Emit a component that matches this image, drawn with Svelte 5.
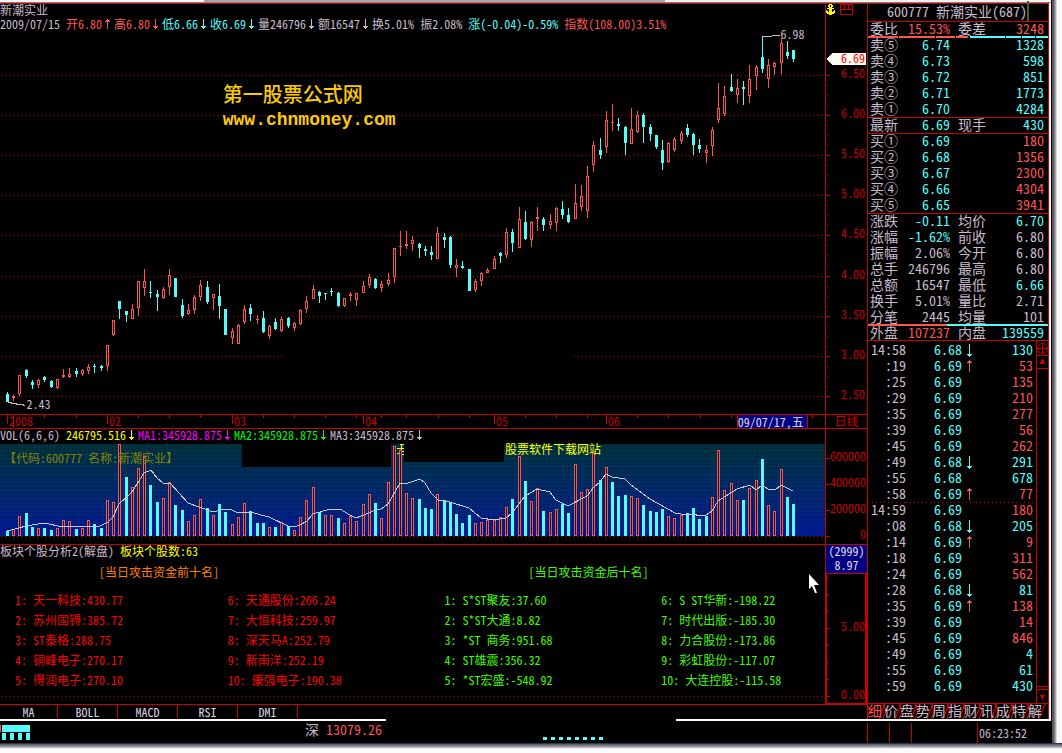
<script>
  // Daily candles: high, body top, body bottom, low, direction (u = up, d = down)
  const candleData = `392,394,402,402,d 395,396,398,401,u 375,375,394,396,u 369,370,376,378,d 380,382,385,389,d 379,380,385,388,u
376,377,380,382,d 380,381,387,388,d 379,379,388,389,u 369,375,377,378,u 368,374,377,378,u 368,371,374,377,d
369,370,374,376,u 364,367,371,374,u 364,366,367,373,d 365,366,368,371,d 345,345,366,371,u 320,320,335,336,u
301,301,309,319,d 311,311,315,322,d 304,309,319,319,u 281,281,308,316,u 269,281,288,296,u 281,292,293,298,d
290,294,297,311,d 287,289,298,299,u 269,275,287,295,u 278,278,297,297,d 299,305,316,318,d 304,310,314,315,u
295,297,310,314,u 280,285,297,301,u 281,287,302,304,d 294,294,298,310,u 284,296,306,319,d 309,309,335,335,d
328,331,338,344,u 324,325,344,344,u 305,309,322,324,u 304,308,314,321,d 315,319,320,324,u 311,318,332,333,d
325,326,336,339,u 318,322,329,330,d 317,319,331,332,u 317,318,326,328,d 322,323,328,331,u 309,310,324,325,u
296,301,309,313,u 285,289,299,299,u 291,292,296,303,d 293,293,294,300,d 288,291,292,296,d 292,293,306,307,d
298,298,306,307,u 292,294,296,301,u 293,293,300,306,u 281,286,293,293,u 274,277,285,288,u 278,279,288,289,d
281,284,288,292,u 273,280,284,286,u 248,248,277,283,u 231,246,247,256,u 231,244,246,249,u 236,240,244,251,u
243,244,248,258,d 246,249,251,256,d 246,252,255,260,d 227,233,259,259,u 233,237,240,248,d 236,237,265,268,d
259,265,268,277,u 261,266,268,269,d 269,269,291,291,d 279,281,290,292,u 272,273,281,286,u 268,270,273,273,u
256,259,269,269,u 252,253,256,263,d 228,232,255,258,u 229,232,243,252,d 207,219,248,248,u 211,222,239,240,d
221,222,240,247,u 207,217,219,231,u 217,219,225,231,d 214,221,225,229,u 207,208,223,231,u 201,209,215,219,d
208,215,222,223,d 184,203,219,219,u 185,196,207,211,u 166,176,211,218,u 141,145,165,172,u 138,150,155,159,d
111,120,147,153,u 104,122,123,131,u 118,124,126,131,d 126,127,143,155,d 108,129,144,144,u 111,115,132,133,u
113,115,127,143,d 124,127,134,141,d 135,135,147,149,d 140,150,163,170,d 142,143,162,163,u 137,139,150,152,u
131,133,141,144,u 124,128,135,137,d 133,134,145,155,d 139,145,149,153,d 145,150,153,163,u 127,130,146,156,u
83,108,120,123,u 86,96,114,116,u 74,87,91,92,d 79,88,95,103,u 81,87,89,105,d 65,79,96,103,u
65,67,76,90,u 36,57,69,73,d 59,65,79,88,u 62,63,67,75,u 38,43,63,74,u 41,52,56,59,d 50,50,59,62,d`;

  const volumeData = `531d 529u 516u 513d 527d 528u 528d 530d 528u 520u 521u 529d 528u 520u 524d 528d 500u 502u 444u 477d 487u
468u 456u 485d 502d 498u 482u 505d 510d 521u 515u 499u 508d 515u 504d 512d 524u 517u 503u 511d 523d 523d 527u
527d 522u 526d 530u 517u 500u 487u 512d 515u 515u 518d 523u 516u 521u 504u 494u 503d 518u 482u 446u 450u 493u
498u 499d 508d 509d 494u 500d 502d 514d 523d 515d 523u 522u 520u 520u 517u 507u 499d 456u 481d 501u 488u 511d
512u 509u 504d 513d 464u 492u 489u 453u 480d 467u 482d 496d 495d 496u 498u 505d 511d 512d 509d 516u 518u 515u
513d 508d 519d 516d 497u 450u 490u 483u 500u 500d 488u 480u 459d 505u 511u 469u 497d 504d`;

  const xAt = (i) => 7 + Math.round(i * 6.238);

  const candles = candleData.split(/\s+/).map((s, i) => {
    const [hi, top, bot, lo, dir] = s.split(',');
    return { x: xAt(i), hi: +hi, top: +top, bot: +bot, lo: +lo, up: dir === 'u' };
  });
  const volumes = volumeData.split(/\s+/).map((s, i) => ({
    x: xAt(i),
    y: parseInt(s),
    up: s.endsWith('u')
  }));

  const average =
    '7,531 19,528 26,526 44,523 63,527 76,526 100,526 108,522 113,517 119,504 132,492 144,473 151,470 157,478 163,483 170,483 188,503 213,512 225,509 232,510 238,513 250,512 269,517 288,526 294,527 300,525 307,521 313,514 330,509 340,509 350,515 356,518 369,513 375,510 381,509 388,504 400,483 408,483 420,479 425,483 431,493 438,500 450,502 469,508 481,518 494,520 506,518 512,513 525,496 537,489 550,492 556,500 568,506 587,496 594,487 600,482 606,474 612,477 625,479 631,485 650,499 675,513 687,515 693,514 700,516 706,515 712,511 718,501 737,489 750,485 756,490 762,485 768,489 775,490 781,485 793,491';

  const priceGrid = [75, 115, 155, 195, 235, 276, 316, 356, 396];
  const priceLabels = ['6.50', '6.00', '5.50', '5.00', '4.50', '4.00', '3.50', '3.00', '2.50'];
  const minorPrice = priceGrid.flatMap((y) => [y + 10, y + 20, y + 30]).filter((y) => y < 396);

  const summary = [
    ['2009/07/15', '', 'grey', true],
    ['开6.80', '↑', 'red'],
    ['高6.80', '↓', 'red'],
    ['低6.66', '↓', 'cyan'],
    ['收6.69', '↓', 'cyan'],
    ['量246796', '↓', 'grey'],
    ['额16547', '↓', 'grey'],
    ['换5.01%', '', 'grey', true],
    ['振2.08%', '', 'grey', true],
    ['涨(-0.04)-0.59%', '', 'cyan', true],
    ['指数(108.00)3.51%', '', 'red']
  ];
  const volSummary = [
    ['VOL(6,6,6)', '', 'grey', true],
    ['246795.516', '↓', 'yellow'],
    ['MA1:345928.875', '↓', 'magenta'],
    ['MA2:345928.875', '↓', 'green'],
    ['MA3:345928.875', '↓', 'grey']
  ];

  const months = [
    [7, '2008'],
    [107, '02'],
    [232, '03'],
    [363, '04'],
    [494, '05'],
    [606, '06']
  ];
  const minorDates = [44, 76, 138, 169, 200, 263, 294, 325, 356, 381, 406, 438, 469, 525, 556, 587, 637, 668, 700, 731, 812];

  const ranks = [
    ['1: 天一科技:430.77', '2: 苏州固锝:385.72', '3: ST泰格:288.75', '4: 铜峰电子:270.17', '5: 得润电子:270.10'],
    ['6: 天通股份:266.24', '7: 大恒科技:259.97', '8: 深天马Ａ:252.79', '9: 新南洋:252.19', '10: 康强电子:190.38'],
    ['1: S*ST聚友:37.60', '2: S*ST大通:8.82', '3: *ST 商务:951.68', '4: ST雄震:356.32', '5: *ST宏盛:-548.92'],
    ['6: S ST华新:-198.22', '7: 时代出版:-185.30', '8: 力合股份:-173.86', '9: 彩虹股份:-117.07', '10: 大连控股:-115.58']
  ];

  // label, value, colour, label, value, colour, row style
  const quotes = [
    ['委比', '15.53%', 'red', '委差', '3248', 'red', 'ratio'],
    ['卖⑤', '6.74', 'cyan', '', '1328', 'cyan', ''],
    ['卖④', '6.73', 'cyan', '', '598', 'cyan', ''],
    ['卖③', '6.72', 'cyan', '', '851', 'cyan', ''],
    ['卖②', '6.71', 'cyan', '', '1773', 'cyan', ''],
    ['卖①', '6.70', 'cyan', '', '4284', 'cyan', 'line'],
    ['最新', '6.69', 'cyan', '现手', '430', 'cyan', 'line'],
    ['买①', '6.69', 'cyan', '', '180', 'red', ''],
    ['买②', '6.68', 'cyan', '', '1356', 'red', ''],
    ['买③', '6.67', 'cyan', '', '2300', 'red', ''],
    ['买④', '6.66', 'cyan', '', '4304', 'red', ''],
    ['买⑤', '6.65', 'cyan', '', '3941', 'red', 'line'],
    ['涨跌', '-0.11', 'cyan', '均价', '6.70', 'cyan', ''],
    ['涨幅', '-1.62%', 'cyan', '前收', '6.80', 'grey', ''],
    ['振幅', '2.06%', 'grey', '今开', '6.80', 'grey', ''],
    ['总手', '246796', 'grey', '最高', '6.80', 'grey', ''],
    ['总额', '16547', 'grey', '最低', '6.66', 'cyan', ''],
    ['换手', '5.01%', 'grey', '量比', '2.71', 'grey', ''],
    ['分笔', '2445', 'grey', '均量', '101', 'grey', 'flow'],
    ['外盘', '107237', 'red', '内盘', '139559', 'cyan', '']
  ];

  const ticks = [
    ['14:58', '6.68', 'd', '130', 'cyan'],
    [':19', '6.69', 'u', '53', 'red'],
    [':25', '6.69', '', '135', 'red'],
    [':29', '6.69', '', '210', 'red'],
    [':35', '6.69', '', '277', 'red'],
    [':39', '6.69', '', '56', 'red'],
    [':45', '6.69', '', '262', 'red'],
    [':49', '6.68', 'd', '291', 'cyan'],
    [':55', '6.68', '', '678', 'cyan'],
    [':58', '6.69', 'u', '77', 'red'],
    ['14:59', '6.69', '', '180', 'red'],
    [':08', '6.68', 'd', '205', 'cyan'],
    [':14', '6.69', 'u', '9', 'red'],
    [':18', '6.69', '', '311', 'red'],
    [':24', '6.69', '', '562', 'red'],
    [':28', '6.68', 'd', '81', 'cyan'],
    [':35', '6.69', 'u', '138', 'red'],
    [':39', '6.69', '', '14', 'red'],
    [':45', '6.69', '', '846', 'red'],
    [':49', '6.69', '', '4', 'cyan'],
    [':55', '6.69', '', '61', 'cyan'],
    [':59', '6.69', '', '430', 'cyan']
  ];

  const indicators = ['MA', 'BOLL', 'MACD', 'RSI', 'DMI'];
  let indicator = $state('');
  const views = [...'细价盘势周指财讯成特解'];
  let view = $state('细');
</script>

{#snippet readout(items)}
  {#each items as [text, arrow, tone, gap]}
    <span class={tone} class:gap>{text}{#if arrow}<svg class="inline-arrow" viewBox="0 0 12 12" aria-label={arrow} shape-rendering="crispEdges">
          {#if arrow === '↑'}
            <path d="M5 1h1v10h-1zM4 2h3v1h-3zM3 3h5v1h-5z" />
          {:else}
            <path d="M5 1h1v10h-1zM4 9h3v1h-3zM3 8h5v1h-5z" />
          {/if}
        </svg>{/if}</span>
  {/each}
{/snippet}

<div class="screen">
  <div class="window">
    <div class="strip"></div>
    <main>
      <div class="charts">
        <section class="price">
          <h1>新潮实业</h1>
          <div class="readout tall">{@render readout(summary)}</div>
          <svg class="plot" viewBox="0 31 825 383" preserveAspectRatio="none" shape-rendering="crispEdges">
            {#each priceGrid as y}
              {#if y === 356}
                <path class="dots" d="M1 {y}.5H283M573 {y}.5H825" />
              {:else}
                <path class="dots" d="M1 {y}.5H825" />
              {/if}
            {/each}
            {#each candles as c}
              {#if c.up}
                <g fill="#fc5454">
                  <rect x={c.x} y={c.hi} width="1" height={c.top - c.hi} />
                  <rect x={c.x} y={c.bot} width="1" height={c.lo - c.bot} />
                  {#if c.bot - c.top < 2}
                    <rect x={c.x - 1} y={c.top} width="3" height="1" />
                  {:else}
                    <rect x={c.x - 1} y={c.top} width="3" height={c.bot - c.top} />
                    <rect x={c.x} y={c.top + 1} width="1" height={c.bot - c.top - 2} fill="#000" />
                  {/if}
                </g>
              {:else}
                <g fill="#54fcfc">
                  <rect x={c.x} y={c.hi} width="1" height={c.lo - c.hi} />
                  <rect x={c.x - 1} y={c.top} width="3" height={c.bot - c.top} />
                </g>
              {/if}
            {/each}
            <path d="M8 402.5h4M11 403.5h6M16 404.5h8M23 405.5h2M763 36.5h9M772 35.5h8" stroke="#c8bccc" />
          </svg>
          <span class="note low">2.43</span>
          <span class="note high">6.98</span>
          <div class="watermark">
            <div>第一股票公式网</div>
            <div class="url">www.chnmoney.com</div>
          </div>
        </section>
        <div class="axis price-axis">
          <svg viewBox="826 4 41 410" width="41" height="410" shape-rendering="crispEdges">
            <path
              fill="#fcfc00"
              d="M829 4h3v1h-3zM828 5h2v2h-2zM831 5h2v2h-2zM829 7h3v1h-3zM827 8h7v1h-7zM830 8h1v6h-1zM829 8h3v6h-3zM826 10h1v3h-1zM827 11h1v3h-1zM828 12h5v2h-5zM833 11h1v3h-1zM834 10h1v3h-1zM829 14h3v1h-3z"
            />
            <path fill="none" stroke="#c80000" d="M840.5 4.5h12v10h-12zM840 9.5h13M848.5 5v5M844.5 5v5" />
            {#each priceGrid as y, i}
              <rect x="826" {y} width="4" height="1" fill="#c80000" />
              <text x="865" y={y + 3} text-anchor="end">{priceLabels[i]}</text>
            {/each}
            {#each minorPrice as y}
              <rect x="827" {y} width="1" height="1" fill="#c80000" />
            {/each}
            <path d="M826 59l6-6h34v12h-34z" fill="#fcfcf0" />
            <text class="tag" x="865" y="63" text-anchor="end">6.69</text>
          </svg>
        </div>

        <section class="dates">
          <svg viewBox="0 415 825 13" preserveAspectRatio="none" shape-rendering="crispEdges">
            {#each months as [x]}<rect {x} y="415" width="1" height="9" fill="#c80000" />{/each}
            <rect x="13" y="415" width="1" height="13" fill="#c80000" />
            {#each minorDates as x}<rect {x} y="415" width="1" height="3" fill="#c80000" />{/each}
          </svg>
          {#each months as [x, label]}
            <span class="month" style="left: {(x / 825) * 100}%">{label}</span>
          {/each}
          <button class="date">09/07/17,五</button>
        </section>
        <div class="axis period">日线</div>

        <section class="volume">
          <div class="readout vol">{@render readout(volSummary)}</div>
          <div class="field">
            <svg viewBox="0 444 825 93" preserveAspectRatio="none" shape-rendering="crispEdges">
              <defs>
                <linearGradient id="sea" x1="0" y1="0" x2="0" y2="1">
                  <stop offset="0" stop-color="#003238" />
                  <stop offset="0.4" stop-color="#002c60" />
                  <stop offset="0.7" stop-color="#002478" />
                  <stop offset="1" stop-color="#001894" />
                </linearGradient>
                <pattern id="grain" width="4" height="4" patternUnits="userSpaceOnUse">
                  <rect width="1" height="1" fill="#000060" opacity="0.6" />
                  <rect x="2" y="2" width="1" height="1" fill="#005058" opacity="0.4" />
                </pattern>
              </defs>
              <rect y="444" width="825" height="92" fill="url(#sea)" />
              <rect y="444" width="825" height="92" fill="url(#grain)" />
              <path d="M242 444h149v23h-149zM404 444h100v18h-100z" />
              <path d="M400 444.5h4M401.5 445v9M401 448.5h3M397 448.5h4M401 451.5h3M397 453.5h3M401 454.5h3" stroke="#fcfc00" fill="none" />
              {#each volumes as v}
                {#if v.up}
                  <rect x={v.x - 1} y={v.y} width="3" height={536 - v.y} fill="#fc5454" />
                  <rect x={v.x} y={v.y + 1} width="1" height={534 - v.y} fill="#001830" />
                {:else}
                  <rect x={v.x - 1} y={v.y} width="3" height={536 - v.y} fill="#54fcfc" />
                {/if}
              {/each}
              <polyline points={average} fill="none" stroke="#c8c8d0" />
              <path class="dots" d="M1 536.5H825" />
            </svg>
            <span class="code">【代码:600777 名称:新潮实业】</span>
            <span class="site">股票软件下载网站</span>
          </div>
        </section>
        <div class="axis">
          <svg viewBox="826 429 41 115" width="41" height="115" shape-rendering="crispEdges">
            {#each [[458, '600000'], [484, '400000'], [510, '200000'], [536, '0']] as [y, label]}
              <rect x="826" {y} width="4" height="1" fill="#c80000" />
              <text x="866" y={y + 3} text-anchor="end">{label}</text>
            {/each}
          </svg>
        </div>

        <section class="analysis">
          <h2>板块个股分析2(解盘) <span class="yellow">板块个股数:63</span></h2>
          <div class="ranks">
            <h3 class="orange">[当日攻击资金前十名]</h3>
            <h3 class="lime">[当日攻击资金后十名]</h3>
            {#each ranks as list, i}
              <ul class={i < 2 ? 'pure' : 'lime'}>
                {#each list as row}<li>{row}</li>{/each}
              </ul>
            {/each}
          </div>
          <div class="zero"></div>
        </section>
        <div class="axis money">
          <div class="level"><span>(2999)</span><span>8.97</span></div>
          <svg viewBox="826 574 41 131" width="41" height="131" shape-rendering="crispEdges">
            {#each [628, 696] as y, i}
              <rect x="826" {y} width="4" height="1" fill="#c80000" />
              <text x="865" y={y + 3} text-anchor="end">{['5.00', '0.00'][i]}</text>
            {/each}
            {#each [577, 594, 611, 645, 662, 679] as y}<rect x="827" {y} width="2" height="1" fill="#c80000" />{/each}
            <path d="M826.5 574v130" stroke="#c80000" />
            <path d="M826 704h41M866 574v130" stroke="#c80000" stroke-width="2" />
          </svg>
        </div>

        <nav class="tabs">
          {#each indicators as name}
            <button aria-pressed={indicator === name} onclick={() => (indicator = name)}>{name}</button>
          {/each}
        </nav>
      </div>

      <aside>
        <header>600777 新潮实业<span class="mark">(687)</span></header>
        <table class="quotes">
          <colgroup><col class="w28" /><col class="w52" /><col class="w36" /><col /></colgroup>
          <tbody>
            {#each quotes as [a, va, ca, b, vb, cb, kind]}
              <tr class={kind}>
                <th>{a}</th>
                <td class={ca}>{va}</td>
                <th class="second">{b}</th>
                <td class={cb}>{vb}</td>
              </tr>
            {/each}
          </tbody>
        </table>
        <div class="trades">
          <table>
            <colgroup><col class="w38" /><col class="w56" /><col class="w14" /><col /></colgroup>
            <tbody>
              {#each ticks as [time, price, move, size, tone], i}
                <tr class:minute={i === 9}>
                  <td>{time}</td>
                  <td class="cyan">{price}</td>
                  <td class="move">
                    {#if move === 'u'}
                      <svg class="red" width="7" height="14" viewBox="0 0 7 14" aria-label="↑"><path d="M3 1h1v12h-1zM2 2h3v1h-3zM1 3h5v1h-5z" /></svg>
                    {:else if move === 'd'}
                      <svg class="cyan" width="7" height="14" viewBox="0 0 7 14" aria-label="↓"><path d="M3 1h1v13h-1zM2 12h3v1h-3zM1 11h5v1h-5z" /></svg>
                    {/if}
                  </td>
                  <td class={tone}>{size}</td>
                </tr>
              {/each}
            </tbody>
          </table>
          <div class="scroller">
            <svg width="11" height="14" viewBox="0 0 11 14"><circle cx="5.5" cy="7.5" r="5" /><path d="M5.5 2v11M0 7.5h11" /></svg>
            <button aria-label="向上"><svg width="11" height="12" viewBox="0 0 11 12"><path class="solid" d="M5 3h1v1h1v2h1v2H3V6h1V4h1z" /></svg></button>
            <div class="track"></div>
            <button aria-label="向下"><svg width="11" height="12" viewBox="0 0 11 12"><path class="solid" d="M5 9h1V7h1V5h1V4H3v1h1v2h1z" /></svg></button>
          </div>
        </div>
        <nav class="views">
          {#each views as name}
            <button class:current={view === name} onclick={() => (view = name)}>
              <svg viewBox="0 0 16 15" width="16" height="15"><path d="M-1 0L2 7L-1 15M17 0L11 15" /></svg>
              <span>{name}</span>
            </button>
          {/each}
        </nav>
      </aside>
    </main>

    <div class="ledge"><i></i><i></i></div>
    <footer>
      <svg class="meter" width="31" height="16" viewBox="0 0 31 16" shape-rendering="crispEdges">
        <rect width="1" height="7" fill="#fc5454" />
        <path fill="#54fcfc" d="M2 0h28v7H2zM2 8h4v7H2zM10 8h4v7h-4zM18 8h4v7h-4zM26 8h4v7h-4z" />
      </svg>
      <div class="index">深 <span class="red">13079.26</span></div>
      <div class="pips">
        {#each Array(8) as _}<i></i>{/each}
      </div>
      <div class="cells"><i></i><i></i><i></i><time>06:23:52</time></div>
    </footer>
  </div>
  <div class="side"></div>
  <div class="base"></div>

  <svg class="pointer" width="12" height="20" viewBox="0 0 12 20"><path d="M0 0v15l3-3 3 7h2l-3-8h5z" fill="#fff" /></svg>
</div>

<style>
  :global(body) {
    margin: 0;
    background: #fcfcfc;
  }
  .screen {
    --line: #c80000;
    position: relative;
    display: grid;
    grid-template-columns: minmax(0, 1fr) 11px;
    color: #c8bccc;
    font-family: 'Noto Sans CJK SC', sans-serif;
    font-feature-settings: 'hwid';
    font-kerning: none;
    font-size: 12px;
    line-height: 14px;
    white-space: nowrap;
  }
  .screen * {
    box-sizing: border-box;
  }
  h1, h2, h3, ul {
    margin: 0;
    padding: 0;
    font-size: 12px;
    font-weight: 400;
    list-style: none;
  }
  button {
    margin: 0;
    padding: 0;
    border: 0;
    background: none;
    color: inherit;
    font: inherit;
    font-feature-settings: inherit;
    cursor: pointer;
  }
  svg {
    display: block;
  }
  .grey { color: #c8bccc; }
  .red { color: #fc5454; }
  .cyan { color: #54fcfc; }
  .yellow { color: #fcfc00; }
  .magenta { color: #fc00fc; }
  .green { color: #00fc00; }
  .lime { color: #40fc00; }
  .orange { color: #fc8000; }
  .pure { color: #fc0000; }

  .window {
    background: #000;
  }
  .strip {
    height: 3px;
    border-bottom: 1px solid #848488;
    background: linear-gradient(90deg, #f8f8f8 204px, #a4a8ac 204px 665px, #f0f4f0 665px);
  }
  main {
    display: grid;
    grid-template-columns: minmax(0, 1fr) 182px;
    border-right: 2px solid #fcfcfc;
  }
  .charts {
    display: grid;
    grid-template-columns: minmax(0, 1fr) 42px;
    align-content: start;
    border-top: 1px solid var(--line);
  }
  .charts > section,
  .axis {
    position: relative;
    border-bottom: 1px solid var(--line);
  }
  .axis {
    border-left: 1px solid var(--line);
  }
  .axis text {
    fill: var(--line);
    font-size: 12px;
  }
  .axis text.tag {
    fill: #fc0000;
  }
  h1 {
    height: 13px;
    line-height: 11px;
  }
  .readout {
    display: flex;
    height: 15px;
    line-height: 12px;
  }
  .readout.tall {
    height: 14px;
  }
  .readout.vol {
    padding-bottom: 3px;
  }
  .readout span {
    display: flex;
    align-items: center;
  }
  .readout .gap {
    padding-right: 6px;
  }
  .inline-arrow {
    width: 12px;
    height: 12px;
    fill: currentColor;
  }
  .plot {
    width: 100%;
    height: 383px;
  }
  .dots {
    fill: none;
    stroke: #c80000;
    stroke-dasharray: 1 3;
  }
  .note {
    position: absolute;
  }
  .low {
    left: 3.2%;
    top: 393px;
  }
  .high {
    left: 94.6%;
    top: 23px;
  }
  .watermark {
    position: absolute;
    left: 27%;
    top: 77px;
    color: #fccc00;
    font-size: 20px;
    font-weight: 500;
    line-height: 26px;
  }
  .url {
    font-family: 'Liberation Mono', monospace;
    font-size: 18px;
    font-weight: 700;
  }
  .dates {
    height: 14px;
    color: var(--line);
  }
  .dates svg {
    width: 100%;
    height: 13px;
  }
  .month {
    position: absolute;
    top: 0;
    padding-left: 2px;
    line-height: 12px;
  }
  .date {
    position: absolute;
    left: 89.3%;
    top: -1px;
    width: 71px;
    height: 15px;
    border: 1px solid var(--line);
    background: #000084;
    color: #e0dce4;
    line-height: 12px;
    text-align: left;
  }
  .period {
    color: var(--line);
    line-height: 12px;
    text-align: center;
  }
  .volume {
    padding-bottom: 7px;
  }
  .field {
    position: relative;
  }
  .field svg {
    width: 100%;
    height: 93px;
  }
  .code {
    position: absolute;
    left: 4px;
    top: 7px;
    color: #848400;
  }
  .site {
    position: absolute;
    left: 61.2%;
    top: -2px;
    color: #fcfc00;
  }
  .analysis h2 {
    height: 14px;
    line-height: 12px;
  }
  .ranks {
    display: grid;
    grid-template-columns: 213fr 217fr 217fr 164fr;
    padding: 6px 0 0 15px;
  }
  .ranks h3 {
    grid-column: span 2;
    padding: 0 0 11px 84px;
    line-height: 14px;
  }
  .ranks li {
    height: 20px;
    line-height: 20px;
  }
  .zero {
    height: 8px;
    margin-top: 6px;
    background: repeating-linear-gradient(90deg, transparent 0 1px, #c80000 1px 2px, transparent 2px 4px) top / 100% 1px no-repeat;
  }
  .axis.money {
    border-bottom: 0;
  }
  .level {
    display: grid;
    height: 29px;
    border-bottom: 1px solid var(--line);
    background: #000084;
    color: #e0dce4;
    line-height: 12px;
    text-align: center;
  }
  .tabs {
    display: flex;
    grid-column: 1 / -1;
    height: 14px;
  }
  .tabs button {
    width: 60px;
    border-right: 1px solid var(--line);
    color: #dcd4e0;
    line-height: 12px;
  }
  .tabs button:first-child {
    width: 58px;
  }

  aside {
    display: flex;
    flex-direction: column;
    border: 1px solid var(--line);
    border-bottom: 0;
    font-size: 14px;
  }
  header {
    height: 18px;
    padding-left: 19px;
    border-bottom: 1px solid var(--line);
    line-height: 15px;
  }
  .mark {
    border-right: 2px solid #406040;
  }
  table {
    width: 100%;
    border-spacing: 0;
    table-layout: fixed;
  }
  tr {
    height: 16px;
  }
  th, td {
    height: 16px;
    padding: 0;
    font-weight: 400;
    line-height: 13px;
    text-align: right;
    vertical-align: top;
  }
  th {
    text-align: left;
    padding-left: 2px;
  }
  th.second {
    padding-left: 8px;
  }
  .quotes td:last-child {
    padding-right: 4px;
  }
  .w28 { width: 30px; }
  .w52 { width: 52px; }
  .w36 { width: 36px; }
  .w38 { width: 38px; }
  .w56 { width: 56px; }
  .w14 { width: 14px; }
  .line > * {
    box-shadow: inset 0 -1px var(--line);
  }
  .ratio {
    background: linear-gradient(90deg, #fc5454 30px, #000 30px 31px, #fc5454 31px 67px, #000 67px 68px, #fc5454 68px 87px, #000 87px 88px, #fc5454 88px 100px, #000 100px 102px, #54fcfc 102px 137px, #000 137px 138px, #54fcfc 138px 153px, #000 153px 154px, #54fcfc 154px 167px, #000 167px 168px, #54fcfc 168px) bottom / 100% 2px no-repeat;
  }
  .flow {
    background: linear-gradient(90deg, #fc5454 44%, #54fcfc 44%) bottom / 100% 2px no-repeat;
  }
  .trades {
    display: flex;
    height: 364px;
    margin-top: -2px;
    border-top: 1px solid var(--line);
    border-bottom: 1px solid var(--line);
  }
  .trades table {
    flex: 1;
    height: 352px;
    margin-top: 2px;
  }
  .trades td:last-child {
    padding-right: 3px;
  }
  .move svg {
    margin-left: 4px;
    fill: currentColor;
  }
  .minute td {
    background: repeating-linear-gradient(90deg, var(--line) 0 1px, transparent 1px 4px) bottom / 100% 1px no-repeat;
  }
  .scroller {
    display: flex;
    flex-direction: column;
    width: 12px;
    border-left: 1px solid var(--line);
  }
  .scroller svg {
    fill: none;
    stroke: var(--line);
  }
  .scroller .solid {
    fill: var(--line);
    stroke: none;
  }
  .scroller button {
    height: 14px;
    border-top: 1px solid var(--line);
    border-bottom: 1px solid var(--line);
  }
  .scroller button:last-child {
    border-bottom: 0;
  }
  .track {
    flex: 1;
    margin-bottom: 2px;
    border-bottom: 1px solid var(--line);
  }
  .views {
    display: flex;
    height: 15px;
  }
  .views button {
    position: relative;
    display: flex;
    width: 16px;
    line-height: 12px;
  }
  .views svg {
    position: absolute;
    inset: 0;
    overflow: visible;
    fill: none;
    stroke: #fc0000;
  }
  .views span {
    position: relative;
  }
  .views .current {
    color: #fc5454;
  }

  .ledge {
    display: flex;
    justify-content: space-between;
    height: 2px;
  }
  .ledge i {
    width: 36.7%;
    background: #fcfcfc;
  }
  .ledge i + i {
    width: 35.7%;
  }
  footer {
    display: grid;
    grid-template-columns: 305px 238px minmax(0, 1fr) 184px;
    height: 22px;
    font-size: 14px;
  }
  .meter {
    margin-top: 4px;
  }
  .index {
    line-height: 16px;
  }
  .pips {
    display: flex;
    gap: 4px;
    padding-top: 16px;
  }
  .pips i {
    width: 4px;
    height: 3px;
    background: #54fcfc;
  }
  .cells {
    display: flex;
    margin-top: 2px;
    border-left: 1px solid var(--line);
    font-size: 12px;
    line-height: 19px;
  }
  .cells i {
    width: 22px;
    border-right: 1px solid var(--line);
  }
  .cells i:nth-child(3) {
    width: 66px;
  }
  .cells time {
    padding-left: 1px;
  }
  .side {
    background: linear-gradient(90deg, #000 1px, #585860 1px 3px, #848088 3px 4px, #a8a4ac 4px 5px, #dcd8dc 5px 6px, #f8f8f8 6px);
  }
  .base {
    grid-column: 1 / -1;
    height: 10px;
    background: linear-gradient(#283844 1px, #586878 1px 2px, #787880 2px 3px, #98949c 3px 4px, #c8c0c0 4px 5px, #f0ecec 5px 6px, #fcfcfc 6px);
  }
  .pointer {
    position: absolute;
    left: 76.2%;
    top: 574px;
  }
</style>
